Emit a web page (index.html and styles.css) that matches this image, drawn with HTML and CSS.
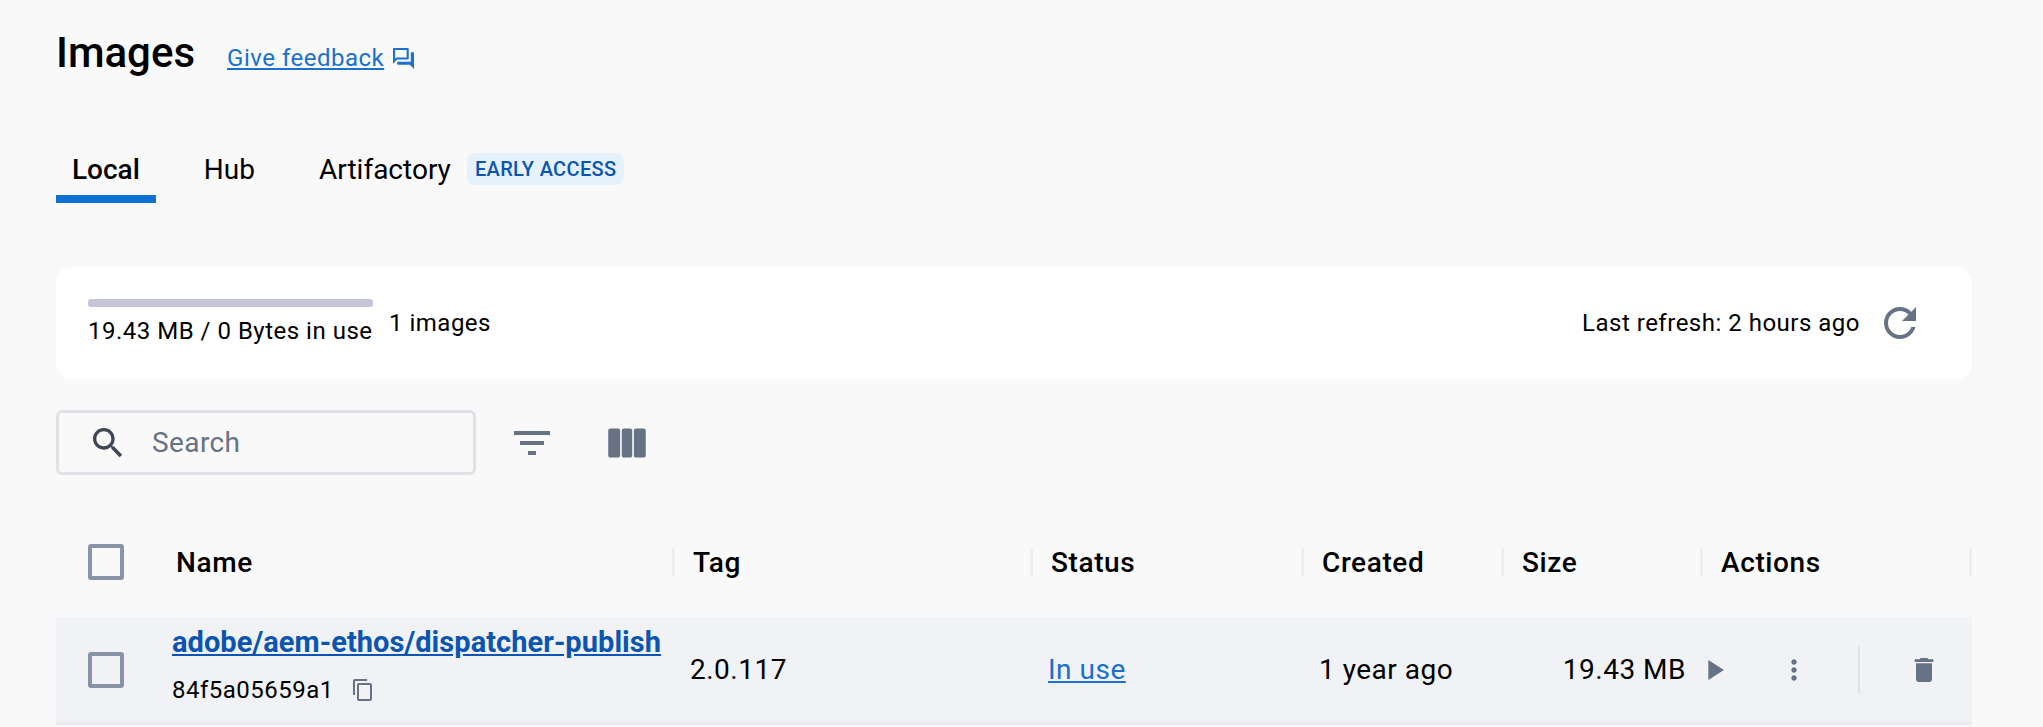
FILE: index.html
```html
<!DOCTYPE html>
<html>
<head>
    <meta charset="UTF-8">
    <title>Images</title>
    <link rel="stylesheet" href="styles.css">
</head>

<body>
    <div class="title-row">
        <h1>Images</h1>
        <a class="feedback" href="#">Give feedback</a>
        <svg class="icon-feedback" viewBox="2 2 20 20"><path d="M15 4v7H5.17l-.59.59-.58.58V4h11m1-2H3c-.55 0-1 .45-1 1v14l4-4h10c.55 0 1-.45 1-1V3c0-.55-.45-1-1-1zm5 4h-2v9H6v2c0 .55.45 1 1 1h11l4 4V7c0-.55-.45-1-1-1z"/></svg>
    </div>

    <div class="tabs">
        <div class="tab active">Local</div>
        <div class="tab tab-hub">Hub</div>
        <div class="tab tab-art">Artifactory</div>
        <span class="badge">EARLY ACCESS</span>
    </div>

    <div class="usage-card">
        <div class="usage">
            <div class="usage-bar"></div>
            <div class="usage-text">19.43 MB / 0 Bytes in use</div>
        </div>
        <div class="usage-count">1 images</div>
        <div class="refresh">Last refresh: 2 hours ago</div>
        <svg class="icon-refresh" viewBox="0 0 24 24"><path d="M17.65 6.35C16.2 4.9 14.21 4 12 4c-4.42 0-7.99 3.58-7.99 8s3.57 8 7.99 8c3.73 0 6.84-2.55 7.73-6h-2.08c-.82 2.33-3.04 4-5.65 4-3.31 0-6-2.69-6-6s2.69-6 6-6c1.66 0 3.14.69 4.22 1.78L13 11h7V4l-2.35 2.35z"/></svg>
    </div>

    <div class="toolbar">
        <div class="search">
            <svg class="icon-search" viewBox="0 0 24 24"><path d="M15.5 14h-.79l-.28-.27C15.41 12.59 16 11.11 16 9.5 16 5.91 13.09 3 9.5 3S3 5.91 3 9.5 5.91 16 9.5 16c1.61 0 3.09-.59 4.23-1.57l.27.28v.79l5 4.99L20.49 19l-4.99-5zm-6 0C7.01 14 5 11.99 5 9.5S7.01 5 9.5 5 14 7.01 14 9.5 11.99 14 9.5 14z"/></svg>
            <span class="search-text">Search</span>
        </div>
        <svg class="icon-tool" viewBox="0 0 24 24"><path d="M10 18h4v-2h-4v2zM3 6v2h18V6H3zm3 7h12v-2H6v2z"/></svg>
        <svg class="icon-tool icon-columns" viewBox="0 0 24 24"><path d="M4 5h3.6c.7 0 1.1.4 1.1 1v12c0 .6-.4 1-1.1 1H4c-.6 0-1-.4-1-1V6c0-.6.4-1 1-1zm6.6 0h2.8c.7 0 1.1.4 1.1 1v12c0 .6-.4 1-1.1 1h-2.8c-.7 0-1.1-.4-1.1-1V6c0-.6.4-1 1.1-1zm5.8 0H20c.6 0 1 .4 1 1v12c0 .6-.4 1-1 1h-3.6c-.7 0-1.1-.4-1.1-1V6c0-.6.4-1 1.1-1z"/></svg>
    </div>

    <div class="table-head">
        <div class="cell-check"><span class="checkbox"></span></div>
        <div class="th th-name">Name<span class="sep"></span></div>
        <div class="th">Tag<span class="sep"></span></div>
        <div class="th">Status<span class="sep"></span></div>
        <div class="th">Created<span class="sep"></span></div>
        <div class="th">Size<span class="sep"></span></div>
        <div class="th">Actions<span class="sep"></span></div>
    </div>

    <div class="table-row">
        <div class="cell-check"><span class="checkbox"></span></div>
        <div class="td-name">
            <a class="image-link" href="#">adobe/aem-ethos/dispatcher-publish</a>
            <div class="image-id">
                84f5a05659a1
                <svg class="icon-copy" viewBox="2 1 19 22"><path d="M16 1H4c-1.1 0-2 .9-2 2v14h2V3h12V1zm3 4H8c-1.1 0-2 .9-2 2v14c0 1.1.9 2 2 2h11c1.1 0 2-.9 2-2V7c0-1.1-.9-2-2-2zm0 16H8V7h11v14z"/></svg>
            </div>
        </div>
        <div class="td">2.0.117</div>
        <div class="td"><a class="status-link" href="#">In use</a></div>
        <div class="td">1 year ago</div>
        <div class="td td-size">19.43 MB</div>
        <div class="td-actions">
            <svg class="icon-play" viewBox="0 0 24 24"><path d="M8 5v14l11-7z"/></svg>
            <svg class="icon-more" viewBox="0 0 24 24"><path d="M12 8c1.1 0 2-.9 2-2s-.9-2-2-2-2 .9-2 2 .9 2 2 2zm0 2c-1.1 0-2 .9-2 2s.9 2 2 2 2-.9 2-2-.9-2-2-2zm0 6c-1.1 0-2 .9-2 2s.9 2 2 2 2-.9 2-2-.9-2-2-2z"/></svg>
            <span class="action-divider"></span>
            <svg class="icon-delete" viewBox="0 0 24 24"><path d="M6 19c0 1.1.9 2 2 2h8c1.1 0 2-.9 2-2V7H6v12zM19 4h-3.5l-1-1h-5l-1 1H5v2h14V4z"/></svg>
        </div>
    </div>
</body>
</html>
```

FILE: styles.css
```css
html {
    height: 100%;
    overflow: hidden;
}

body {
    margin: 0;
    padding: 0 71px 0 56px;
    background: #f9f9fa;
    color: #000000;
    font-family: Roboto, "Liberation Sans", sans-serif;
    font-size: 24px;
}

svg {
    display: block;
    flex: none;
    fill: #677285;
}

/* title */
.title-row {
    display: flex;
    align-items: center;
    height: 104px;
}

h1 {
    margin: 0 32px 0 0;
    font-size: 42px;
    font-weight: 500;
}

.feedback {
    color: #1a70cc;
    font-size: 24px;
    letter-spacing: 0.5px;
    margin-top: 12px;
}

.icon-feedback {
    width: 21px;
    height: 21px;
    margin: 12px 0 0 9px;
    fill: #1a70cc;
}

/* tabs */
.tabs {
    display: flex;
    align-items: flex-start;
    height: 99px;
}

.tab {
    height: 99px;
    padding: 41px 16px 0;
    box-sizing: border-box;
    font-size: 28px;
    line-height: 50px;
    border-bottom: 8px solid transparent;
}

.tab.active {
    font-weight: 500;
    border-bottom-color: #1170d6;
}

.tab-hub {
    margin-left: 32px;
}

.tab-art {
    margin-left: 32px;
}

.badge {
    margin-top: 49px;
    padding: 0 8px;
    height: 32px;
    line-height: 32px;
    border-radius: 8px;
    background: #e5f2fc;
    color: #0b55b0;
    font-size: 20px;
    font-weight: 500;
    letter-spacing: 0.35px;
}

/* usage card */
.usage-card {
    display: flex;
    align-items: center;
    height: 112px;
    margin-top: 64px;
    padding: 0 48px 0 32px;
    background: #ffffff;
    border-radius: 16px;
}

.usage {
    width: 285px;
    margin-bottom: 2px;
}

.usage-bar {
    height: 8px;
    border-radius: 3px;
    background: #c4c6d3;
}

.usage-text {
    margin-top: 10px;
    font-size: 24px;
    letter-spacing: 0.5px;
    white-space: nowrap;
}

.usage-count {
    margin-left: 16px;
    letter-spacing: 0.5px;
}

.refresh {
    margin-left: auto;
    letter-spacing: 0.5px;
}

.icon-refresh {
    width: 48px;
    height: 48px;
    margin-left: 16px;
}

/* toolbar */
.toolbar {
    display: flex;
    align-items: center;
    height: 65px;
    margin-top: 31px;
}

.search {
    display: flex;
    align-items: center;
    width: 420px;
    height: 65px;
    box-sizing: border-box;
    border: 3px solid #e1e2e7;
    border-radius: 6px;
    padding-left: 29px;
}

.icon-search {
    width: 40px;
    height: 40px;
    fill: #3e4653;
}

.search-text {
    margin-left: 24px;
    font-size: 28px;
    color: #677285;
    letter-spacing: 0.4px;
}

.icon-tool {
    width: 48px;
    height: 48px;
    margin-left: 32px;
}

.icon-columns {
    width: 50px;
    height: 50px;
    margin-left: 46px;
}

/* table */
.table-head {
    display: grid;
    grid-template-columns: 120px 499px 358px 271px 200px 199px 269px;
    align-items: center;
    height: 80px;
    margin-top: 47px;
    margin-bottom: 15px;
}

.cell-check {
    display: flex;
    align-items: center;
    padding-left: 32px;
}

.checkbox {
    width: 36px;
    height: 36px;
    box-sizing: border-box;
    border: 4px solid #8993a6;
    border-radius: 3px;
}

.th {
    display: flex;
    align-items: center;
    justify-content: space-between;
    height: 28px;
    padding-left: 18px;
    font-size: 28px;
    font-weight: 500;
    letter-spacing: 0.6px;
}

.th-name {
    padding-left: 0;
}

.sep {
    width: 3px;
    height: 28px;
    background: #eeeff2;
}

.table-row {
    display: grid;
    grid-template-columns: 116px 503px 358px 271px 200px 193px 275px;
    align-items: center;
    height: 105px;
    background: #f0f2f5;
    border-bottom: 3px solid #e9ebee;
}

.td-name {
    margin-bottom: 10px;
    white-space: nowrap;
}

.image-link {
    color: #0b55b0;
    font-size: 29px;
    font-weight: 700;
    letter-spacing: 0.05px;
}

.image-id {
    display: flex;
    align-items: center;
    margin-top: 17px;
    font-size: 24px;
    letter-spacing: 0.5px;
}

.icon-copy {
    width: 19px;
    height: 22px;
    margin-left: 19px;
}

.td {
    padding-left: 15px;
    font-size: 28px;
    letter-spacing: 0.5px;
}

.td-size {
    padding: 0 11px 0 0;
    text-align: right;
}

.status-link {
    color: #1a70cc;
}

.td-actions {
    display: flex;
    align-items: center;
}

.icon-play {
    width: 34px;
    height: 34px;
}

.icon-more {
    width: 32px;
    height: 32px;
    margin-left: 47px;
}

.action-divider {
    width: 2px;
    height: 48px;
    margin-left: 48px;
    background: #e1e3e7;
}

.icon-delete {
    width: 32px;
    height: 32px;
    margin-left: 48px;
}
```
